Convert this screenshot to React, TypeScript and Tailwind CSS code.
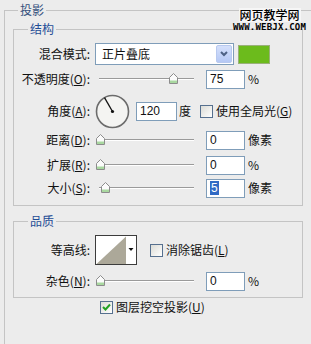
import React from "react";

const cjk = "font-['Noto_Sans_CJK_SC','Noto_Sans',sans-serif]";

function Thumb() {
  return (
    <svg width="9" height="11" viewBox="0 0 9 11">
      <path d="M0.5 4.5 L4.5 0.5 L8.5 4.5 V10.5 H0.5 Z" fill="#fbfbfb" stroke="#8c8c8c" />
      <path d="M1 7.5 H8 V10 H1 Z" fill="#a9d8a0" />
    </svg>
  );
}

function Slider({ value }: { value: number }) {
  return (
    <div className="relative ml-[5px] h-[22px] w-[104px]">
      <div className="absolute left-[4px] right-[5px] top-[10px] h-[2px] border-t border-[#9a9a9a] bg-white" />
      <div className="absolute top-[5px]" style={{ left: 1 + value * 0.97 }}>
        <Thumb />
      </div>
    </div>
  );
}

function NumBox({ value, width = "w-[39px]", selected = false, className = "" }: { value: string; width?: string; selected?: boolean; className?: string }) {
  return (
    <div className={`flex h-[19px] ${width} items-center border border-[#7f9db9] bg-white pl-[3px] font-['Liberation_Sans',sans-serif] text-[12px] ${className}`}>
      {selected ? <span className="bg-[#316ac5] px-[1px] leading-[14px] text-white">{value}</span> : <span className="leading-[14px]">{value}</span>}
    </div>
  );
}

function Label({ children }: { children: React.ReactNode }) {
  return <div className="w-[76px] shrink-0 text-right leading-[14px]">{children}</div>;
}

function CheckBox({ checked = false }: { checked?: boolean }) {
  return (
    <div className="flex h-[13px] w-[13px] items-center justify-center border border-[#56708f] bg-gradient-to-br from-[#dcdcd6] to-white">
      {checked && (
        <svg width="9" height="8" viewBox="0 0 9 8">
          <path d="M1 4 L3.5 6.5 L8 1.5" fill="none" stroke="#22a122" strokeWidth="2" />
        </svg>
      )}
    </div>
  );
}

function SliderRow({ label, value, unit, mt, selected = false }: { label: React.ReactNode; value: number; unit: string; mt: string; selected?: boolean }) {
  return (
    <div className={`flex h-[22px] items-center ${mt}`}>
      <Label>{label}</Label>
      <Slider value={value} />
      <NumBox value={String(value)} className="ml-[7px]" selected={selected} />
      <span className="ml-[3px] leading-[14px]">{unit}</span>
    </div>
  );
}

export default function App() {
  return (
    <div className={`relative h-[344px] w-[311px] overflow-hidden bg-[#ececec] text-[12px] text-[#111] ${cjk}`}>
      <fieldset className="ml-[4px] mt-[3px] h-[370px] w-[330px] border border-[#c4c4c4]">
        <legend className="ml-[13px] px-[2px] leading-[14px] text-[#34507c]">投影</legend>

        <fieldset className="ml-[8px] mt-[5px] w-[290px] border border-[#c4c4c4] pb-[6px]">
          <legend className="ml-[14px] px-[2px] leading-[14px] text-[#1f4d96]">结构</legend>

          <div className="mt-[7px] flex h-[22px] items-center">
            <Label>混合模式:</Label>
            <div className="ml-[5px] flex h-[22px] w-[139px] items-center justify-between border border-[#7f9db9] bg-white pl-[6px] pr-[1px]">
              <span className="leading-[14px]">正片叠底</span>
              <div className="flex h-[18px] w-[16px] items-center justify-center rounded-[2px] border border-[#b8c9ef] bg-gradient-to-b from-[#d5e0fb] to-[#b5c8f5]">
                <svg width="8" height="6" viewBox="0 0 8 6">
                  <path d="M1 1 L4 4 L7 1" fill="none" stroke="#4d6185" strokeWidth="2" />
                </svg>
              </div>
            </div>
            <div className="ml-[4px] h-[19px] w-[32px] border border-[#9ab07a] bg-[#6cbb1c]" />
          </div>

          <SliderRow label={<>不透明度(<u>O</u>):</>} value={75} unit="%" mt="mt-[3px]" />

          <div className="mt-[3px] flex h-[36px] items-center">
            <Label>角度(<u>A</u>):</Label>
            <svg className="ml-[5px]" width="35" height="35" viewBox="0 0 35 35">
              <circle cx="17.5" cy="17.5" r="16" fill="#f4f4f2" stroke="#6c6c6c" strokeWidth="1.6" />
              <line x1="17.5" y1="17.5" x2="9.5" y2="3.6" stroke="#111" strokeWidth="1.3" />
              <circle cx="17.5" cy="17.5" r="1.6" fill="#111" />
            </svg>
            <NumBox value="120" width="w-[41px]" className="ml-[6px]" />
            <span className="ml-[2px] leading-[14px]">度</span>
            <div className="ml-[9px]">
              <CheckBox />
            </div>
            <span className="ml-[3px] leading-[14px]">使用全局光(<u>G</u>)</span>
          </div>

          <SliderRow label={<>距离(<u>D</u>):</>} value={0} unit="像素" mt="mt-0" />
          <SliderRow label={<>扩展(<u>R</u>):</>} value={0} unit="%" mt="mt-[3px]" />
          <SliderRow label={<>大小(<u>S</u>):</>} value={5} unit="像素" mt="mt-[1px]" selected />
        </fieldset>

        <fieldset className="ml-[8px] mt-[8px] w-[290px] border border-[#c4c4c4] pb-[5px]">
          <legend className="ml-[14px] px-[2px] leading-[14px] text-[#1f4d96]">品质</legend>

          <div className="mt-[7px] flex h-[30px] items-center">
            <Label>等高线:</Label>
            <svg className="ml-[5px]" width="42" height="30" viewBox="0 0 42 30">
              <rect x="0.5" y="0.5" width="41" height="29" fill="#fff" stroke="#3c3c3c" />
              <polygon points="1.5,29 31,1.5 31,29" fill="#aca899" />
              <polygon points="33.5,13 38.5,13 36,16" fill="#111" />
            </svg>
            <div className="ml-[13px]">
              <CheckBox />
            </div>
            <span className="ml-[3px] leading-[14px]">消除锯齿(<u>L</u>)</span>
          </div>

          <SliderRow label={<>杂色(<u>N</u>):</>} value={0} unit="%" mt="mt-[5px]" />
        </fieldset>

        <div className="mt-[2px] flex items-center pl-[95px]">
          <CheckBox checked />
          <span className="ml-[3px] leading-[14px]">图层挖空投影(<u>U</u>)</span>
        </div>
      </fieldset>

      <div className="absolute left-[233px] top-[8px] flex flex-col items-center">
        <span className="bg-[#f6f6f6] px-[1px] text-[12px] font-medium leading-[14px] text-black">网页教学网</span>
        <span className="mt-[1px] font-['DejaVu_Sans_Mono',monospace] text-[9px] font-bold leading-[9px] tracking-[0.2px] text-black">WWW.WEBJX.COM</span>
      </div>
    </div>
  );
}
